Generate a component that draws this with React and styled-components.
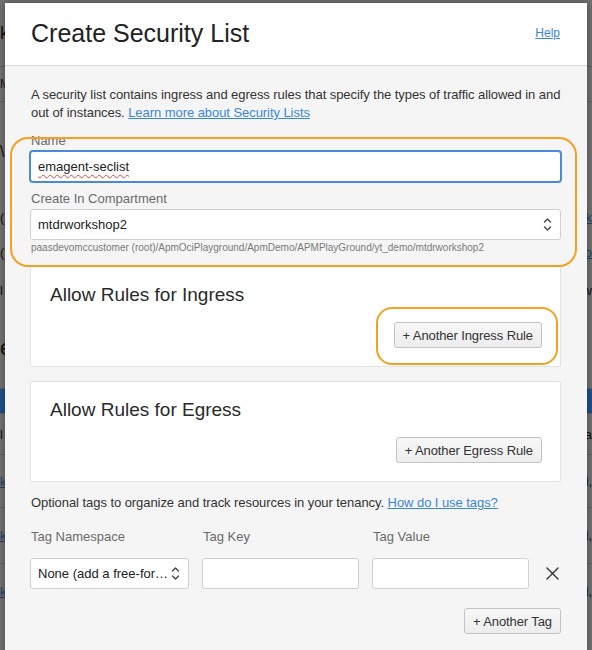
import React from 'react'
import styled, { createGlobalStyle } from 'styled-components'

const GlobalStyle = createGlobalStyle`
  html, body {
    margin: 0;
    padding: 0;
    width: 592px;
    height: 650px;
    overflow: hidden;
    background: #6f6f6f;
    font-family: "Liberation Sans", Arial, Helvetica, sans-serif;
  }
`

const Screen = styled.div`
  position: relative;
  width: 592px;
  height: 650px;
  overflow: hidden;
`

/* the page that sits behind the modal, dimmed */
const Backdrop = styled.div`
  display: flex;
  flex-direction: column;
  width: 100%;
  height: 100%;
  background: #6f6f6f;
  color: #111;
  font-size: 20px;
`

const BackRow = styled.div`
  display: flex;
  justify-content: space-between;
  align-items: center;
  height: ${p => p.h}px;
  border-bottom: ${p => (p.line ? '1px solid #5c5c5c' : 'none')};
  background: ${p => p.bg || 'transparent'};
  font-size: ${p => p.size || 18}px;
  span { color: #111; }
  span.link { color: #1c3f66; text-decoration: underline; }
`

const Dialog = styled.div`
  position: absolute;
  left: 5px;
  top: 3px;
  width: 582px;
  height: 660px;
  background: #f5f5f5;
  box-shadow: 0 0 6px rgba(0, 0, 0, 0.35);
  display: flex;
  flex-direction: column;
`

const Header = styled.div`
  flex-shrink: 0;
  height: 63px;
  box-sizing: border-box;
  background: #fff;
  border-bottom: 1px solid #dcdcdc;
  display: flex;
  align-items: center;
  justify-content: space-between;
  padding: 0 27px 2px 26px;
`

const Title = styled.h1`
  margin: 0;
  font-size: 25px;
  font-weight: 400;
  color: #222;
`

const Link = styled.a`
  color: #3a87d6;
  text-decoration: underline;
  font-size: ${p => p.size || 13}px;
  cursor: pointer;
`

const Body = styled.div`
  padding: 20px 26px 0 25px;
  display: flex;
  flex-direction: column;
`

const Text = styled.p`
  margin: ${p => p.m || '0'};
  padding-left: 1px;
  font-size: 13px;
  line-height: 18px;
  letter-spacing: -0.06px;
  color: #333;
`

const Label = styled.div`
  padding-left: 1px;
  font-size: 13px;
  line-height: 16px;
  color: #6a6a6a;
  margin: ${p => p.m || '0'};
`

const FieldBox = styled.div`
  height: 31px;
  box-sizing: border-box;
  background: #fff;
  border: 1px solid ${p => (p.focused ? '#4a89d6' : '#cfcfcf')};
  box-shadow: ${p => (p.focused ? '0 0 0 1px #4a89d6' : 'none')};
  border-radius: 3px;
  display: flex;
  align-items: center;
  justify-content: space-between;
  padding: 0 8px 0 7px;
  font-size: 13px;
  color: #222;
`

const Spelled = styled.span`
  text-decoration: underline wavy #e0453a;
  text-decoration-thickness: 1px;
  text-underline-offset: 3px;
`

const PathText = styled.div`
  padding-left: 1px;
  margin-top: 1px;
  font-size: 10px;
  line-height: 13px;
  color: #7a7a7a;
`

const Panel = styled.div`
  margin-top: ${p => p.mt}px;
  height: 101px;
  box-sizing: border-box;
  background: #fff;
  border: 1px solid #e2e2e2;
  border-radius: 2px;
  padding: 17px 18px 18px 19px;
  display: flex;
  flex-direction: column;
  justify-content: space-between;
`

const PanelTitle = styled.h2`
  margin: 0;
  font-size: 19px;
  font-weight: 400;
  line-height: 22px;
  color: #2a2a2a;
`

const Button = styled.button`
  align-self: flex-end;
  height: 26px;
  padding: 0 8px;
  border: 1px solid #c3c3c3;
  border-radius: 3px;
  background: linear-gradient(#f7f7f7, #ededed);
  font-family: inherit;
  font-size: 13px;
  letter-spacing: -0.1px;
  color: #333;
  cursor: pointer;
`

const TagGrid = styled.div`
  display: grid;
  grid-template-columns: 159px 157px 157px 1fr;
  column-gap: 13px;
  row-gap: 13px;
  margin-top: 17px;
  align-items: center;
`

const CloseCell = styled.div`
  display: flex;
  justify-content: flex-end;
  padding-right: 2px;
`

const TagFooter = styled.div`
  display: flex;
  justify-content: flex-end;
  margin-top: 19px;
`

const Highlight = styled.div`
  position: absolute;
  left: ${p => p.x}px;
  top: ${p => p.y}px;
  width: ${p => p.w}px;
  height: ${p => p.h}px;
  box-sizing: border-box;
  border: 2px solid #f5a023;
  border-radius: ${p => p.r}px;
  pointer-events: none;
`

const Chevrons = () => (
  <svg width="9" height="15" viewBox="0 0 9 15" fill="none" stroke="#444" strokeWidth="1.4" strokeLinecap="round" strokeLinejoin="round">
    <path d="M1.5 5 L4.5 2 L7.5 5" />
    <path d="M1.5 10 L4.5 13 L7.5 10" />
  </svg>
)

const CloseIcon = () => (
  <svg width="13" height="13" viewBox="0 0 13 13" stroke="#333" strokeWidth="1.4" strokeLinecap="round">
    <path d="M1 1 L12 12 M12 1 L1 12" />
  </svg>
)

export default function App() {
  return (
    <Screen>
      <GlobalStyle />
      <Backdrop>
        <BackRow h={66} line><span>k</span><span></span></BackRow>
        <BackRow h={34} line size={12}><span>M</span><span></span></BackRow>
        <BackRow h={100} size={16}><span>\</span><span></span></BackRow>
        <BackRow h={30} size={13}><span>(</span><span className="link">k</span></BackRow>
        <BackRow h={40} size={13}><span>(</span><span className="link">o</span></BackRow>
        <BackRow h={36} size={13}><span>l</span><span>w</span></BackRow>
        <BackRow h={80} size={22} line><span>e</span><span></span></BackRow>
        <BackRow h={24} bg="#1d4e86" line><span></span><span></span></BackRow>
        <BackRow h={40} line size={13}><span>l</span><span>a</span></BackRow>
        <BackRow h={52} line size={13}><span className="link">k</span><span>d,</span></BackRow>
        <BackRow h={55} line size={13}><span className="link">k</span><span>d,</span></BackRow>
        <BackRow h={55} size={13}><span className="link">k</span><span>d,</span></BackRow>
      </Backdrop>

      <Dialog>
        <Header>
          <Title>Create Security List</Title>
          <Link size={12}>Help</Link>
        </Header>

        <Body>
          <Text>
            A security list contains ingress and egress rules that specify the types of traffic allowed in and
            out of instances. <Link>Learn more about Security Lists</Link>
          </Text>

          <Label m="11px 0 2px 0">Name</Label>
          <FieldBox focused>
            <Spelled>emagent-seclist</Spelled>
          </FieldBox>

          <Label m="9px 0 2px 0">Create In Compartment</Label>
          <FieldBox>
            <span>mtdrworkshop2</span>
            <Chevrons />
          </FieldBox>
          <PathText>paasdevomccustomer (root)/ApmOciPlayground/ApmDemo/APMPlayGround/yt_demo/mtdrworkshop2</PathText>

          <Panel mt={12}>
            <PanelTitle>Allow Rules for Ingress</PanelTitle>
            <Button>+ Another Ingress Rule</Button>
          </Panel>

          <Panel mt={14}>
            <PanelTitle>Allow Rules for Egress</PanelTitle>
            <Button>+ Another Egress Rule</Button>
          </Panel>

          <Text m="12px 0 0 0">
            Optional tags to organize and track resources in your tenancy. <Link>How do I use tags?</Link>
          </Text>

          <TagGrid>
            <Label>Tag Namespace</Label>
            <Label>Tag Key</Label>
            <Label>Tag Value</Label>
            <span />
            <FieldBox>
              <span>None (add a free-for…</span>
              <Chevrons />
            </FieldBox>
            <FieldBox />
            <FieldBox />
            <CloseCell><CloseIcon /></CloseCell>
          </TagGrid>

          <TagFooter>
            <Button>+ Another Tag</Button>
          </TagFooter>
        </Body>

        <Highlight x={5} y={134} w={567} h={130} r={18} />
        <Highlight x={371} y={304} w={182} h={58} r={16} />
      </Dialog>
    </Screen>
  )
}
